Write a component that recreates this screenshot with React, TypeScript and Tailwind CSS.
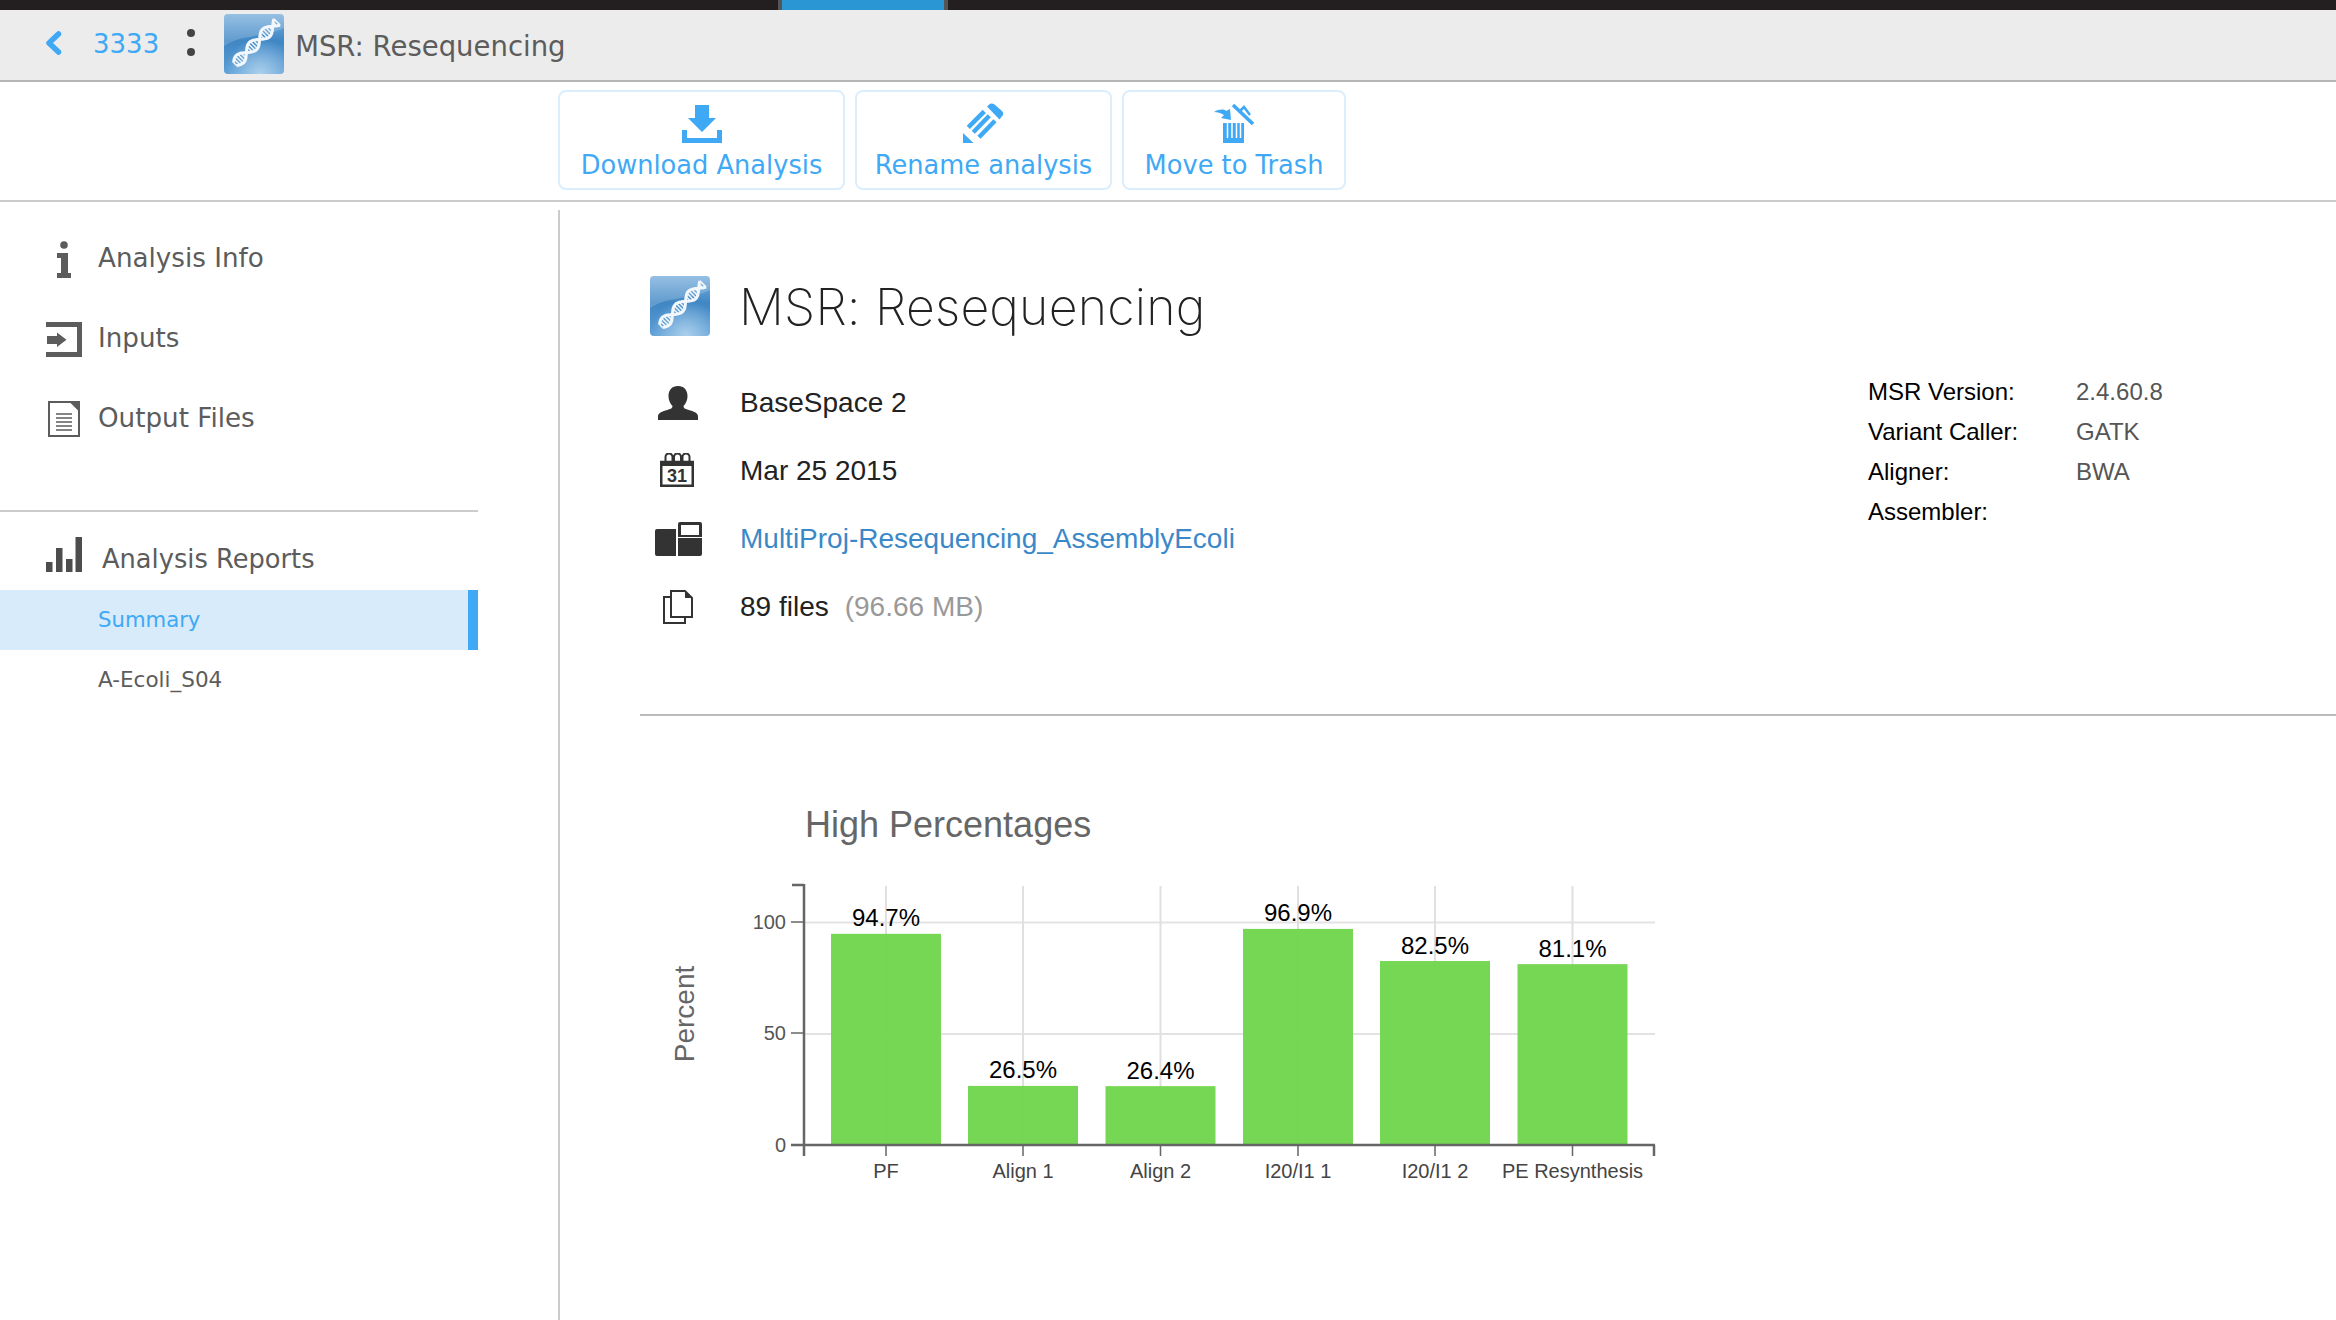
const blue = "#3fa9f5";
const ink = "#5c5c5c";

function helixPoints(phase: number) {
  const pts: [number, number][] = [];
  const ax = 11, ay = 50, bx = 53, by = 8;
  const len = Math.hypot(bx - ax, by - ay);
  const nx = (by - ay) / len, ny = -(bx - ax) / len;
  for (let i = 0; i <= 40; i++) {
    const t = i / 40;
    const off = 5.2 * Math.sin(t * Math.PI * 3.2 + phase);
    pts.push([ax + (bx - ax) * t + nx * off, ay + (by - ay) * t + ny * off]);
  }
  return pts;
}

function Dna({ size }: { size: number }) {
  const gid = `logo${size}`;
  const rid = `glow${size}`;
  const a = helixPoints(0.4);
  const b = helixPoints(0.4 + Math.PI);
  const toPath = (p: [number, number][]) => p.map((q, i) => `${i ? "L" : "M"}${q[0].toFixed(1)} ${q[1].toFixed(1)}`).join("");
  return (
    <svg width={size} height={size} viewBox="0 0 60 60" className="shrink-0 block">
      <defs>
        <linearGradient id={gid} x1="0" y1="0" x2="0" y2="1">
          <stop offset="0" stopColor="#7fb2de" />
          <stop offset="0.45" stopColor="#3f86c4" />
          <stop offset="1" stopColor="#5d9fd6" />
        </linearGradient>
        <radialGradient id={rid} cx="0.6" cy="1" r="0.6">
          <stop offset="0" stopColor="#b4d5ee" stopOpacity="0.9" />
          <stop offset="1" stopColor="#b4d5ee" stopOpacity="0" />
        </radialGradient>
      </defs>
      <rect width="60" height="60" rx="4" fill={`url(#${gid})`} />
      <rect width="60" height="60" rx="4" fill={`url(#${rid})`} />
      <path d="M0 4a4 4 0 0 1 4-4h52a4 4 0 0 1 4 4v10C40 24 18 20 0 32z" fill="#fff" opacity="0.18" />
      <path d={toPath(a)} fill="none" stroke="#f2f7fc" strokeWidth="3" />
      <path d={toPath(b)} fill="none" stroke="#f2f7fc" strokeWidth="3" />
      {a.map((q, i) =>
        i % 2 === 0 ? (
          <line key={i} x1={q[0]} y1={q[1]} x2={b[i][0]} y2={b[i][1]} stroke="#f2f7fc" strokeWidth="1.5" />
        ) : null,
      )}
    </svg>
  );
}

function DownloadIcon() {
  return (
    <svg width="40" height="38" viewBox="0 0 40 38" className="block">
      <path d="M13 0h14v13h7L20 27 6 13h7z" fill={blue} />
      <path d="M0 25h5v8h30v-8h5v13H0z" fill={blue} />
    </svg>
  );
}

function PencilIcon() {
  return (
    <svg width="41" height="40" viewBox="0 0 41 40" className="block">
      <path d="M24 3.500L27 .8Q29 0 31 1L39 8Q41 10 40 12L36.500 16.500z" fill={blue} />
      <path d="M5.300 24.300L21.300 8.300M10.300 29.300L26.300 12.700M16 34.300L32 17.700" stroke={blue} strokeWidth="4.500" fill="none" />
      <path d="M0 30L10.500 40H0z" fill={blue} />
    </svg>
  );
}

function TrashIcon() {
  return (
    <svg width="40" height="39" viewBox="0 0 40 39" className="block">
      <path d="M0 8C5 5 10 5 12 7L16 5L17 16L7 14L10 11C7 9 3 8 0 8z" fill={blue} />
      <path d="M19 1L39 20" stroke={blue} strokeWidth="3.500" fill="none" />
      <path d="M26 7L30 3L36 11" stroke={blue} strokeWidth="2.500" fill="none" />
      <path d="M9 19h21v20H9z" fill={blue} />
      <path d="M13.500 19v15M18 19v15M22.500 19v15M26.500 19v15" stroke="#fff" strokeWidth="1.500" />
    </svg>
  );
}

function InfoIcon() {
  return (
    <svg width="36" height="37" viewBox="0 0 36 37" className="block">
      <circle cx="18" cy="4" r="3.800" fill={ink} />
      <path d="M11 12h11v20h3v5H11v-5h4V17h-4z" fill={ink} />
    </svg>
  );
}

function InputsIcon() {
  return (
    <svg width="36" height="35" viewBox="0 0 36 35" className="block">
      <path d="M0 0h36v35H0v-5h31V5H0z" fill={ink} />
      <path d="M1 14h10v-3.500l9.500 7.300-9.500 7.300V22H1z" fill={ink} />
    </svg>
  );
}

function OutputIcon() {
  return (
    <svg width="32" height="36" viewBox="0 0 32 36" className="block ml-[2px]">
      <path d="M1 1h22l8 8v26H1z" fill="#fff" stroke={ink} strokeWidth="2" />
      <path d="M22 0h10v10z" fill={ink} />
      <path d="M8 13h16M8 17h16M8 21h16M8 25h16M8 29h16" stroke={ink} strokeWidth="1.600" />
    </svg>
  );
}

function BarsIcon() {
  return (
    <svg width="36" height="36" viewBox="0 0 36 36" className="block shrink-0">
      <path d="M0 26h6.500v10H0zM10 12h6.500v24H10zM20 23h6.500v13H20zM29.500 1H36v35h-6.500z" fill="#4d4d4d" />
    </svg>
  );
}

function PersonIcon() {
  return (
    <svg width="40" height="34" viewBox="0 0 40 34" className="block">
      <path d="M20 0c6 0 9.500 4 9.500 10 0 4-1.500 7.500-4 10 0 2.500 2 3 7 4.500 5 1.500 7.500 3 7.500 6V34H0v-3.500c0-3 2.500-4.500 7.500-6 5-1.500 7-2 7-4.500-2.500-2.500-4-6-4-10C10.500 4 14 0 20 0z" fill="#333" />
    </svg>
  );
}

function CalendarIcon() {
  return (
    <svg width="34" height="34" viewBox="0 0 34 34" className="block -ml-[2px] -mt-[2px]">
      <path d="M1.250 9h31.500v23.750H1.250z" fill="#fff" stroke="#333" strokeWidth="2.500" />
      <path d="M0 8h34v5H0z" fill="#333" />
      <path d="M5.500 9V4a3.500 3.500 0 0 1 7 0v5M14 9V4a3.500 3.500 0 0 1 7 0v5M22.500 9V4a3.500 3.500 0 0 1 7 0v5" fill="none" stroke="#333" strokeWidth="2" />
      <text x="17" y="29" textAnchor="middle" fontFamily="'Liberation Sans', sans-serif" fontWeight="700" fontSize="18" fill="#333">31</text>
    </svg>
  );
}

function ProjectIcon() {
  return (
    <svg width="47" height="34" viewBox="0 0 47 34" className="block">
      <path d="M2 7h19v27H2a2 2 0 0 1-2-2V9a2 2 0 0 1 2-2z" fill="#333" />
      <path d="M23 2a2 2 0 0 1 2-2h20a2 2 0 0 1 2 2v13H23zM26 3v10h18V3z" fill="#333" fillRule="evenodd" />
      <path d="M23 16h24v16a2 2 0 0 1-2 2H23z" fill="#333" />
    </svg>
  );
}

function FilesIcon() {
  return (
    <svg width="30" height="34" viewBox="0 0 30 34" className="block" fill="none" stroke="#333" strokeWidth="2">
      <path d="M8 1h14l7 7v19H8z" />
      <path d="M22 1l7 7h-7z" fill="#333" stroke="none" />
      <path d="M8 7H1v26h21v-6" />
    </svg>
  );
}

const bars = [
  { x: 831, label: "PF", pct: "94.7%", value: 94.7 },
  { x: 968, label: "Align 1", pct: "26.5%", value: 26.5 },
  { x: 1105.5, label: "Align 2", pct: "26.4%", value: 26.4 },
  { x: 1243, label: "I20/I1 1", pct: "96.9%", value: 96.9 },
  { x: 1380, label: "I20/I1 2", pct: "82.5%", value: 82.5 },
  { x: 1517.5, label: "PE Resynthesis", pct: "81.1%", value: 81.1 },
];

function Chart() {
  const ox = 640;
  const oy = 860;
  const y = (v: number) => 1146 - v * 2.23 - oy;
  const font = "'Liberation Sans', Arial, sans-serif";
  return (
    <svg width="1040" height="330" viewBox="0 0 1040 330" className="block" fontFamily={font}>
      {[100, 50].map((v) => (
        <line key={v} x1={804 - ox} x2={1655 - ox} y1={y(v) + 0.5} y2={y(v) + 0.5} stroke="#e3e3e3" strokeWidth="2" />
      ))}
      {bars.map((b) => (
        <line key={b.label} x1={b.x + 55 - ox} x2={b.x + 55 - ox} y1={887 - oy} y2={1146 - oy} stroke="#e0e0e0" strokeWidth="2" />
      ))}
      {bars.map((b) => (
        <rect key={b.label} x={b.x - ox} y={y(b.value)} width={110} height={b.value * 2.23} fill="#6fd54b" fillOpacity="0.95" />
      ))}
      <g stroke="#666" strokeWidth="2.5" fill="none">
        <path d="M164 26h-12" />
        <line x1={804 - ox} x2={804 - ox} y1={885 - oy} y2={1157 - oy} />
        <line x1={791 - ox} x2={1655 - ox} y1={1146 - oy} y2={1146 - oy} />
        <line x1={1654 - ox} x2={1654 - ox} y1={1146 - oy} y2={1157 - oy} />
        <line x1={791 - ox} x2={804 - ox} y1={923 - oy} y2={923 - oy} strokeWidth="1.5" />
        <line x1={791 - ox} x2={804 - ox} y1={1034 - oy} y2={1034 - oy} strokeWidth="1.5" />
        {bars.map((b) => (
          <line key={b.label} x1={b.x + 55 - ox} x2={b.x + 55 - ox} y1={1146 - oy} y2={1157 - oy} strokeWidth="1.5" />
        ))}
      </g>
      {[
        ["100", 923],
        ["50", 1034],
        ["0", 1146],
      ].map(([t, py]) => (
        <text key={t as string} x={786 - ox} y={(py as number) + 7 - oy} textAnchor="end" fontSize="20" fill="#555">
          {t}
        </text>
      ))}
      {bars.map((b) => (
        <text key={b.label} x={b.x + 55 - ox} y={y(b.value) - 7.5} textAnchor="middle" fontSize="24" fill="#000">
          {b.pct}
        </text>
      ))}
      {bars.map((b) => (
        <text key={b.label} x={b.x + 55 - ox} y={1179 - oy} textAnchor="middle" fontSize="20" fill="#444">
          {b.label}
        </text>
      ))}
      <text transform={`translate(${694 - ox} ${1015 - oy}) rotate(-90)`} textAnchor="middle" fontSize="28" fill="#666">
        Percent
      </text>
    </svg>
  );
}

function ToolButton({ icon, label, w }: { icon: React.ReactNode; label: string; w: string }) {
  return (
    <div className={`${w} h-[100px] border-2 border-[#daeefd] rounded-[8px] flex flex-col items-center pt-[11px]`}>
      <div className="h-[40px] flex items-end justify-center">{icon}</div>
      <div className="text-[25.7px] leading-[36px] mt-[4px] text-[#3fa9f5] whitespace-nowrap">{label}</div>
    </div>
  );
}

function NavRow({ icon, label }: { icon: React.ReactNode; label: string }) {
  return (
    <div className="h-[80px] flex items-center pl-[46px]">
      <div className="w-[52px] flex items-center">{icon}</div>
      <div className="text-[26.2px] text-[#5c5c5c] whitespace-nowrap">{label}</div>
    </div>
  );
}

function MetaRow({ icon, children }: { icon: React.ReactNode; children: React.ReactNode }) {
  return (
    <div className="h-[68px] flex items-center">
      <div className="w-[100px] flex justify-center pr-[24px]">{icon}</div>
      <div className="text-[28px] text-[#222] whitespace-nowrap">{children}</div>
    </div>
  );
}

export default function App() {
  return (
    <div className="w-[2336px] h-[1320px] overflow-hidden bg-white flex flex-col font-['DejaVu_Sans',sans-serif]">
      <div className="h-[10px] bg-[#231f20] flex shrink-0">
        <div className="ml-[778px] w-[170px] bg-[#555] px-[4px]">
          <div className="h-full bg-[#2a97d4]" />
        </div>
      </div>

      <div className="h-[72px] shrink-0 bg-[#ececec] border-b-2 border-[#b5b5b5] flex items-center">
        <svg width="18" height="24" viewBox="0 0 18 24" className="ml-[45px] block -mt-[5px]">
          <path d="M13.500 3L4 12l9.500 9" fill="none" stroke={blue} strokeWidth="5.500" strokeLinecap="round" strokeLinejoin="round" />
        </svg>
        <div className="ml-[30px] text-[26px] text-[#3fa9f5] leading-none -mt-[2px]">3333</div>
        <div className="ml-[28px] flex flex-col gap-[11px] -mt-[6px]">
          <div className="w-[8px] h-[8px] rounded-full bg-[#444]" />
          <div className="w-[8px] h-[8px] rounded-full bg-[#444]" />
        </div>
        <div className="ml-[29px] -mt-[2px]">
          <Dna size={60} />
        </div>
        <div className="ml-[11px] text-[27.5px] text-[#5c5c5c] whitespace-nowrap mt-[4px]">MSR: Resequencing</div>
      </div>

      <div className="h-[120px] shrink-0 border-b-2 border-[#cccccc] pl-[558px] pt-[8px] flex gap-[10px]">
        <ToolButton icon={<DownloadIcon />} label="Download Analysis" w="w-[287px]" />
        <ToolButton icon={<PencilIcon />} label="Rename analysis" w="w-[257px]" />
        <ToolButton icon={<TrashIcon />} label="Move to Trash" w="w-[224px]" />
      </div>

      <div className="flex flex-1 pt-[8px] min-h-0">
        <div className="w-[560px] shrink-0 border-r-2 border-[#cccccc] pt-[9px]">
          <div className="w-[478px]">
            <NavRow icon={<InfoIcon />} label="Analysis Info" />
            <NavRow icon={<InputsIcon />} label="Inputs" />
            <NavRow icon={<OutputIcon />} label="Output Files" />
            <div className="mt-[51px] border-t-2 border-[#cccccc] h-[80px] flex items-start pt-[24px] pl-[46px]">
              <BarsIcon />
              <div className="ml-[20px] text-[25.7px] leading-[36px] mt-[5px] text-[#5c5c5c] whitespace-nowrap">Analysis Reports</div>
            </div>
            <div className="h-[60px] bg-[#d7ebfa] border-r-[10px] border-[#3fa9f5] flex items-center pl-[98px] text-[21.2px] text-[#3fa9f5]">
              Summary
            </div>
            <div className="h-[60px] flex items-center pl-[98px] text-[21.5px] text-[#5c5c5c]">A-Ecoli_S04</div>
          </div>
        </div>

        <div className="flex-1 min-w-0 pl-[80px]">
          <div className="flex pt-[66px] h-[506px] border-b-2 border-[#bbbbbb] font-['Liberation_Sans',Arial,sans-serif]">
            <div className="flex-1 pl-[10px]">
              <div className="flex items-center h-[60px]">
                <Dna size={60} />
                <div className="ml-[29px] mt-[2px] text-[50px] font-['Inter',sans-serif] font-extralight text-[#222] whitespace-nowrap tracking-[0.2px]">
                  MSR: Resequencing
                </div>
              </div>
              <div className="mt-[33px] -ml-[10px]">
                <MetaRow icon={<PersonIcon />}>BaseSpace 2</MetaRow>
                <MetaRow icon={<CalendarIcon />}>Mar 25 2015</MetaRow>
                <MetaRow icon={<ProjectIcon />}>
                  <span className="text-[#3b88c9]">MultiProj-Resequencing_AssemblyEcoli</span>
                </MetaRow>
                <MetaRow icon={<FilesIcon />}>
                  89 files<span className="ml-[16px] text-[#999]">(96.66 MB)</span>
                </MetaRow>
              </div>
            </div>
            <div className="w-[468px] shrink-0 pt-[96px] text-[24px] leading-[40px]">
              <div className="grid grid-cols-[208px_1fr]">
                <div className="text-black">MSR Version:</div>
                <div className="text-[#555]">2.4.60.8</div>
                <div className="text-black">Variant Caller:</div>
                <div className="text-[#555]">GATK</div>
                <div className="text-black">Aligner:</div>
                <div className="text-[#555]">BWA</div>
                <div className="text-black">Assembler:</div>
                <div />
              </div>
            </div>
          </div>
          <div className="font-['Liberation_Sans',Arial,sans-serif]">
            <div className="pl-[165px] pt-[84px] text-[36px] leading-[50px] text-[#666]">High Percentages</div>
            <div className="mt-[9px]">
              <Chart />
            </div>
          </div>
        </div>
      </div>
    </div>
  );
}
